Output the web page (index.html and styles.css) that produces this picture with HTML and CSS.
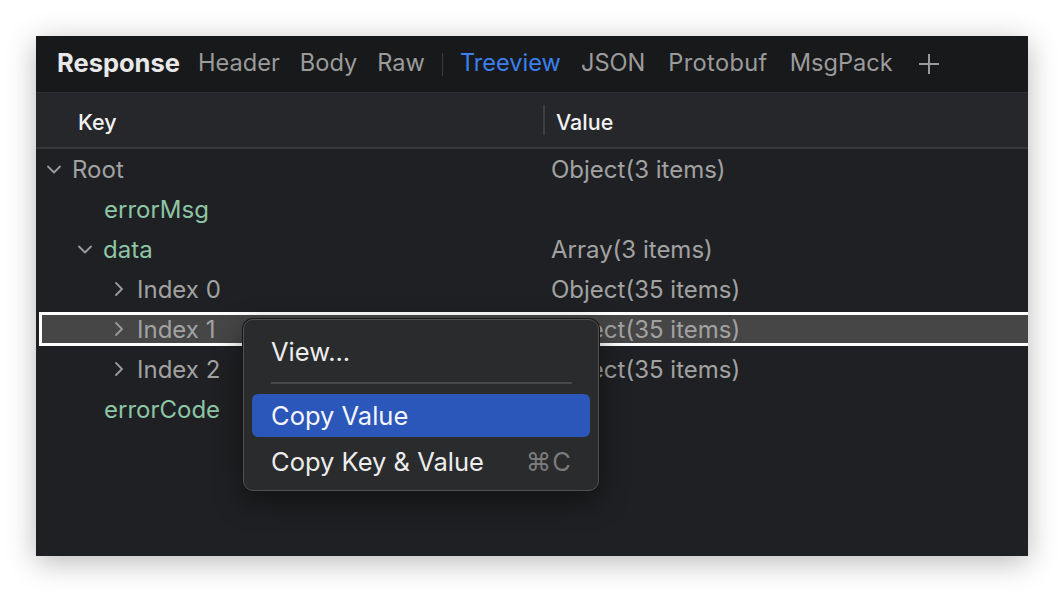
FILE: index.html
```html
<!DOCTYPE html>
<html>
<head>
<meta charset="utf-8">
<link rel="stylesheet" href="styles.css">
</head>
<body>
<div class="window">
  <div class="tabbar">
    <span class="tab title">Response</span>
    <span class="tab">Header</span>
    <span class="tab">Body</span>
    <span class="tab">Raw</span>
    <span class="tabsep"></span>
    <span class="tab active">Treeview</span>
    <span class="tab wide">JSON</span>
    <span class="tab wide spaced">Protobuf</span>
    <span class="tab wide">MsgPack</span>
    <svg class="plus" width="22" height="22" viewBox="0 0 22 22"><path d="M11 1v20M1 11h20" stroke="#9a9a9a" stroke-width="2" fill="none"/></svg>
  </div>
  <div class="colhead">
    <div class="ckey">Key</div>
    <div class="cdiv"></div>
    <div class="cval">Value</div>
  </div>
  <div class="rows">
    <div class="row">
      <div class="key l0"><svg class="chev" width="16" height="16" viewBox="0 0 16 16"><path d="M2 5.5l6 6 6-6" stroke="#9a9a9a" stroke-width="1.8" fill="none" stroke-linecap="round" stroke-linejoin="round"/></svg><span class="gray">Root</span></div>
      <div class="val">Object(3 items)</div>
    </div>
    <div class="row">
      <div class="key l1 nochev"><span class="green">errorMsg</span></div>
      <div class="val"></div>
    </div>
    <div class="row">
      <div class="key l1"><svg class="chev" width="16" height="16" viewBox="0 0 16 16"><path d="M2 5.5l6 6 6-6" stroke="#9a9a9a" stroke-width="1.8" fill="none" stroke-linecap="round" stroke-linejoin="round"/></svg><span class="green">data</span></div>
      <div class="val">Array(3 items)</div>
    </div>
    <div class="row">
      <div class="key l2"><svg class="chev" width="16" height="16" viewBox="0 0 16 16"><path d="M5 2l6 6-6 6" stroke="#9a9a9a" stroke-width="1.8" fill="none" stroke-linecap="round" stroke-linejoin="round"/></svg><span class="gray">Index 0</span></div>
      <div class="val">Object(35 items)</div>
    </div>
    <div class="row selected">
      <div class="selbox">
        <div class="key l2 sel"><svg class="chev" width="16" height="16" viewBox="0 0 16 16"><path d="M5 2l6 6-6 6" stroke="#9a9a9a" stroke-width="1.8" fill="none" stroke-linecap="round" stroke-linejoin="round"/></svg><span class="gray">Index 1</span></div>
        <div class="val">Object(35 items)</div>
      </div>
    </div>
    <div class="row">
      <div class="key l2"><svg class="chev" width="16" height="16" viewBox="0 0 16 16"><path d="M5 2l6 6-6 6" stroke="#9a9a9a" stroke-width="1.8" fill="none" stroke-linecap="round" stroke-linejoin="round"/></svg><span class="gray">Index 2</span></div>
      <div class="val">Object(35 items)</div>
    </div>
    <div class="row">
      <div class="key l1 nochev"><span class="green">errorCode</span></div>
      <div class="val"></div>
    </div>
  </div>
  <div class="menu">
    <div class="mitem">View...</div>
    <div class="msep"></div>
    <div class="mitem hl">Copy Value</div>
    <div class="mitem last"><span>Copy Key &amp; Value</span><span class="short">⌘C</span></div>
  </div>
</div>
</body>
</html>
```

FILE: styles.css
```css
html, body {
  margin: 0;
  padding: 0;
  background: #ffffff;
}
body {
  font-family: Inter, "Noto Sans", "Liberation Sans", sans-serif;
  width: 1064px;
  height: 592px;
  overflow: hidden;
  padding-top: 36px;
  padding-left: 36px;
  box-sizing: border-box;
}
.window {
  position: relative;
  width: 992px;
  height: 520px;
  background: #1f2023;
  box-shadow: 0 6px 28px rgba(0, 0, 0, 0.28);
  overflow: hidden;
}
.tabbar {
  height: 56px;
  background: #18191b;
  display: flex;
  align-items: center;
  padding-left: 21px;
  border-bottom: 1px solid #2f3033;
  box-sizing: content-box;
}
.tab {
  font-size: 23.6px;
  color: #9b9b9b;
  margin-right: 20px;
  line-height: 1;
  padding-bottom: 2px;
}
.tab.wide {
  margin-right: 23px;
}
.tab.spaced {
  letter-spacing: 0.35px;
  margin-right: 22px;
}
.tab.title {
  color: #e8e8e8;
  font-weight: 700;
  font-size: 25.5px;
  margin-right: 18px;
}
.tab.active {
  color: #3a80f0;
}
.tabsep {
  width: 1px;
  height: 23px;
  background: #3a3b3e;
  margin-right: 17px;
  margin-left: -3px;
}
.plus {
  margin-left: 2px;
}
.colhead {
  background: #26272a;
  border-bottom: 2px solid #37383b;
  display: flex;
  align-items: center;
  padding-top: 3px;
  box-sizing: border-box;
  height: 56px;
}
.ckey {
  width: 465px;
  padding-left: 42px;
  font-size: 21.5px;
  font-weight: 500;
  color: #f2f2f2;
}
.cdiv {
  width: 2px;
  height: 30px;
  background: #3c3d40;
  margin-top: -3px;
}
.cval {
  padding-left: 11px;
  font-size: 21.5px;
  font-weight: 500;
  color: #f2f2f2;
}
.rows {
  display: flex;
  flex-direction: column;
}
.row {
  height: 40px;
  display: flex;
  align-items: center;
  font-size: 24px;
}
.key {
  width: 515px;
  display: flex;
  align-items: center;
  box-sizing: border-box;
}
.chev {
  margin-right: 10px;
  flex: none;
}
.l0 { padding-left: 10px; }
.l1 { padding-left: 41px; }
.l1.nochev { padding-left: 68px; }
.l2 { padding-left: 75px; }
.gray { color: #a2a2a2; }
.green { color: #8cc6a4; }
.val {
  color: #a2a2a2;
}
.selbox {
  margin-left: 3px;
  flex: 1;
  height: 34px;
  border: 3px solid #ffffff;
  border-right: none;
  background: #464646;
  display: flex;
  align-items: center;
  box-sizing: border-box;
}
.key.sel {
  width: 509px;
  padding-left: 69px;
}
.menu {
  position: absolute;
  left: 207px;
  top: 283px;
  width: 356px;
  height: 172px;
  box-sizing: border-box;
  background: #2a2b2d;
  border: 1px solid #505153;
  border-radius: 10px;
  box-shadow: 0 0 0 1px #151618, 0 10px 30px rgba(0, 0, 0, 0.45);
  padding: 10px 8px 0 8px;
  display: flex;
  flex-direction: column;
}
.mitem {
  height: 43px;
  display: flex;
  align-items: center;
  justify-content: space-between;
  padding: 0 18px 0 19px;
  font-size: 25.5px;
  color: #ededed;
  border-radius: 6px;
}
.mitem.hl {
  background: #2c57ba;
  color: #f4f6fb;
}
.mitem.last {
  margin-top: 3px;
}
.msep {
  height: 2px;
  background: #47484a;
  margin: 9px 18px 10px 19px;
}
.short {
  color: #7a7a7a;
  letter-spacing: 1px;
}
```
